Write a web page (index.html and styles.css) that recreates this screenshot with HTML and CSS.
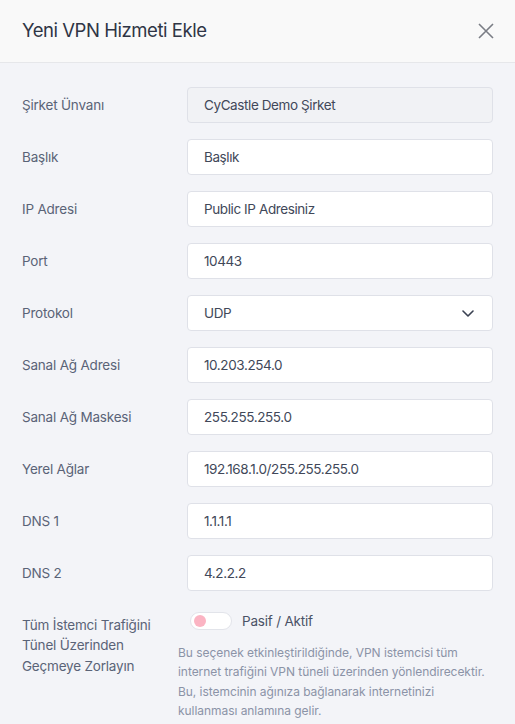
FILE: index.html
```html
<!DOCTYPE html>
<html lang="tr">
<head>
<meta charset="utf-8">
<title>Yeni VPN Hizmeti Ekle</title>
<link rel="stylesheet" href="styles.css">
</head>
<body>
<div class="modal">
  <div class="header">
    <h1 class="title">Yeni VPN Hizmeti Ekle</h1>
    <svg class="close" width="16" height="16" viewBox="0 0 16 16"><path d="M1 1L15 15M15 1L1 15" stroke="#7a7d85" stroke-width="1.6" fill="none"/></svg>
  </div>
  <div class="body">
    <div class="row"><label class="label">Şirket Ünvanı</label><div class="input disabled">CyCastle Demo Şirket</div></div>
    <div class="row"><label class="label">Başlık</label><div class="input">Başlık</div></div>
    <div class="row"><label class="label">IP Adresi</label><div class="input">Public IP Adresiniz</div></div>
    <div class="row"><label class="label">Port</label><div class="input">10443</div></div>
    <div class="row"><label class="label">Protokol</label><div class="input select"><span>UDP</span><svg width="12" height="7" viewBox="0 0 12 7"><path d="M1 1L6 6L11 1" stroke="#3a4152" stroke-width="1.6" fill="none" stroke-linecap="round" stroke-linejoin="round"/></svg></div></div>
    <div class="row"><label class="label">Sanal Ağ Adresi</label><div class="input">10.203.254.0</div></div>
    <div class="row"><label class="label">Sanal Ağ Maskesi</label><div class="input">255.255.255.0</div></div>
    <div class="row"><label class="label">Yerel Ağlar</label><div class="input">192.168.1.0/255.255.255.0</div></div>
    <div class="row"><label class="label">DNS 1</label><div class="input">1.1.1.1</div></div>
    <div class="row"><label class="label">DNS 2</label><div class="input">4.2.2.2</div></div>
    <div class="row toggle-row">
      <label class="label long">Tüm İstemci Trafiğini Tünel Üzerinden Geçmeye Zorlayın</label>
      <div class="toggle-col">
        <div class="toggle-line"><span class="switch"><span class="knob"></span></span><span class="toggle-text">Pasif / Aktif</span></div>
        <p class="help">Bu seçenek etkinleştirildiğinde, VPN istemcisi tüm internet trafiğini VPN tüneli üzerinden yönlendirecektir. Bu, istemcinin ağınıza bağlanarak internetinizi kullanması anlamına gelir.</p>
      </div>
    </div>
  </div>
</div>
</body>
</html>
```
FILE: styles.css
```css
* { box-sizing: border-box; }
html, body { margin: 0; padding: 0; }
body {
  font-family: Inter, "Noto Sans", sans-serif;
  background: #f3f4f8;
  width: 515px;
  height: 724px;
  overflow: hidden;
}
.modal { width: 515px; }
.header {
  height: 63px;
  background: #f9f9f9;
  border-bottom: 1px solid #e6e7ea;
  display: flex;
  align-items: center;
  justify-content: space-between;
  padding: 0 21px 0 22px;
}
.title {
  margin: 0;
  font-size: 18.5px;
  font-weight: 400;
  color: #2f3545;
  letter-spacing: -0.45px;
  padding-bottom: 2px;
}
.close { display: block; margin-top: -1px; }
.body {
  background: #f3f4f8;
  padding: 24px 22px 0 22px;
}
.row {
  display: flex;
  align-items: center;
  margin-bottom: 16px;
}
.label {
  width: 165px;
  flex: none;
  font-size: 13.5px;
  color: #5a6377;
  letter-spacing: -0.2px;
}
.input {
  width: 306px;
  height: 36px;
  background: #ffffff;
  border: 1px solid #dfe1e8;
  border-radius: 4px;
  padding: 0 16px;
  display: flex;
  align-items: center;
  font-size: 13.5px;
  color: #414859;
  letter-spacing: -0.4px;
}
.input.disabled { background: #f1f2f5; }
.select { justify-content: space-between; padding-right: 18px; }
.select svg { display: block; }
.toggle-row { align-items: flex-start; margin-top: 21px; }
.label.long {
  width: 156px;
  line-height: 20.5px;
  margin-top: 2.5px;
}
.toggle-col { width: 312px; flex: none; }
.toggle-line { display: flex; align-items: center; margin-left: 12px; height: 18px; }
.switch {
  width: 42px;
  height: 18px;
  border: 1px solid #e2e4ea;
  border-radius: 9px;
  background: #ffffff;
  display: flex;
  align-items: center;
  padding-left: 3px;
}
.knob {
  width: 12px;
  height: 12px;
  border-radius: 50%;
  background: #fbb4c3;
}
.toggle-text {
  margin-left: 10px;
  font-size: 13.5px;
  color: #4a5266;
  letter-spacing: -0.2px;
}
.help {
  margin: 12.5px 0 0 0;
  font-size: 12px;
  line-height: 19.5px;
  color: #8b93a7;
  letter-spacing: -0.05px;
}
```
